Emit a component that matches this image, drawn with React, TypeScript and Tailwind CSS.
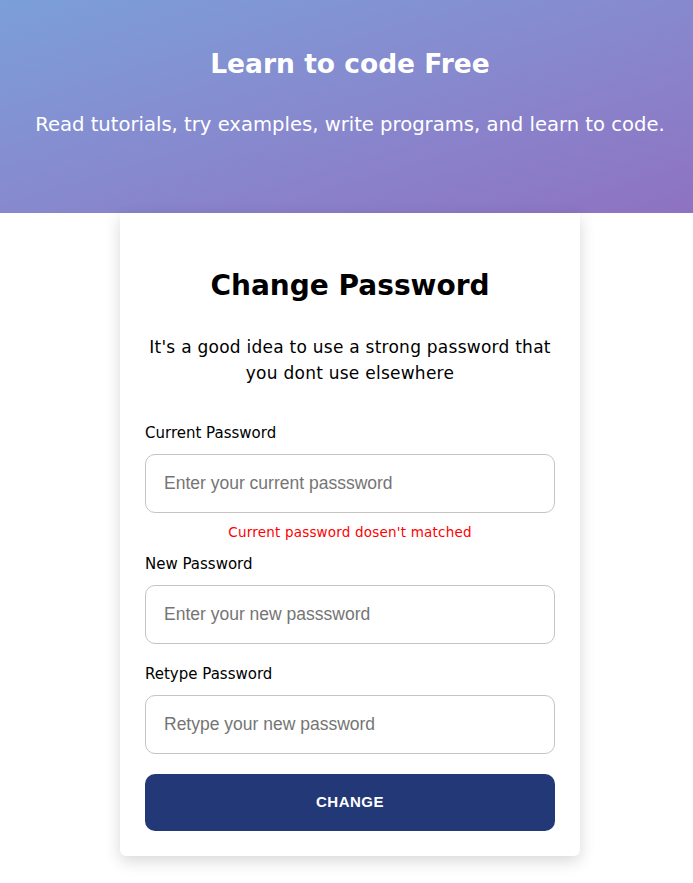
import React from 'react';

const font = { fontFamily: '"DejaVu Sans", "Open Sans", sans-serif' };
const arial = { fontFamily: '"Liberation Sans", Arial, sans-serif' };

const Field: React.FC<{ label: string; placeholder: string; error?: string; last?: boolean }> = ({
  label,
  placeholder,
  error,
  last,
}) => (
  <div className={last ? '' : error ? 'mb-[13px]' : 'mb-[20px]'}>
    <label className="block text-[15px] leading-[20px] text-black mb-[11px]">{label}</label>
    <input
      type="password"
      placeholder={placeholder}
      className="block w-full h-[59px] px-[18px] rounded-[10px] border border-[#c4c4c4] bg-white text-[17.5px] placeholder:text-[#757575] outline-none"
      style={arial}
    />
    {error && (
      <p className="mt-[10px] text-center text-[13.5px] tracking-[0.2px] leading-[18px] text-[#ff0000]">{error}</p>
    )}
  </div>
);

const App: React.FC = () => {
  return (
    <div className="min-h-screen bg-white overflow-hidden" style={font}>
      <div className="w-[700px]">
        <header className="h-[213px] bg-gradient-to-br from-[#7b9fd9] to-[#8e72c2] text-white text-center pt-[45px]">
          <h1 className="text-[26.5px] leading-[38px] font-bold">Learn to code Free</h1>
          <p className="mt-[28px] text-[19.6px] leading-[28px]">
            Read tutorials, try examples, write programs, and learn to code.
          </p>
        </header>

        <div className="w-[460px] mx-auto bg-white rounded-b-[6px] shadow-[0_5px_16px_rgba(0,0,0,0.16)] px-[25px] pt-[55px] pb-[25px]">
          <h2 className="text-center text-[28px] leading-[36px] font-bold text-black">Change Password</h2>
          <p className="mt-[30px] mb-[37px] text-center text-[17px] tracking-[0.25px] leading-[26px] text-black">
            It's a good idea to use a strong password that
            <br />
            you dont use elsewhere
          </p>

          <Field label="Current Password" placeholder="Enter your current passsword" error="Current password dosen't matched" />
          <Field label="New Password" placeholder="Enter your new passsword" />
          <Field label="Retype Password" placeholder="Retype your new password" last />

          <button
            className="mt-[20px] w-full h-[57px] rounded-[10px] bg-[#233876] text-white text-[15px] font-bold tracking-[0.5px]"
            style={arial}
          >
            CHANGE
          </button>
        </div>
      </div>
    </div>
  );
};

export default App;
